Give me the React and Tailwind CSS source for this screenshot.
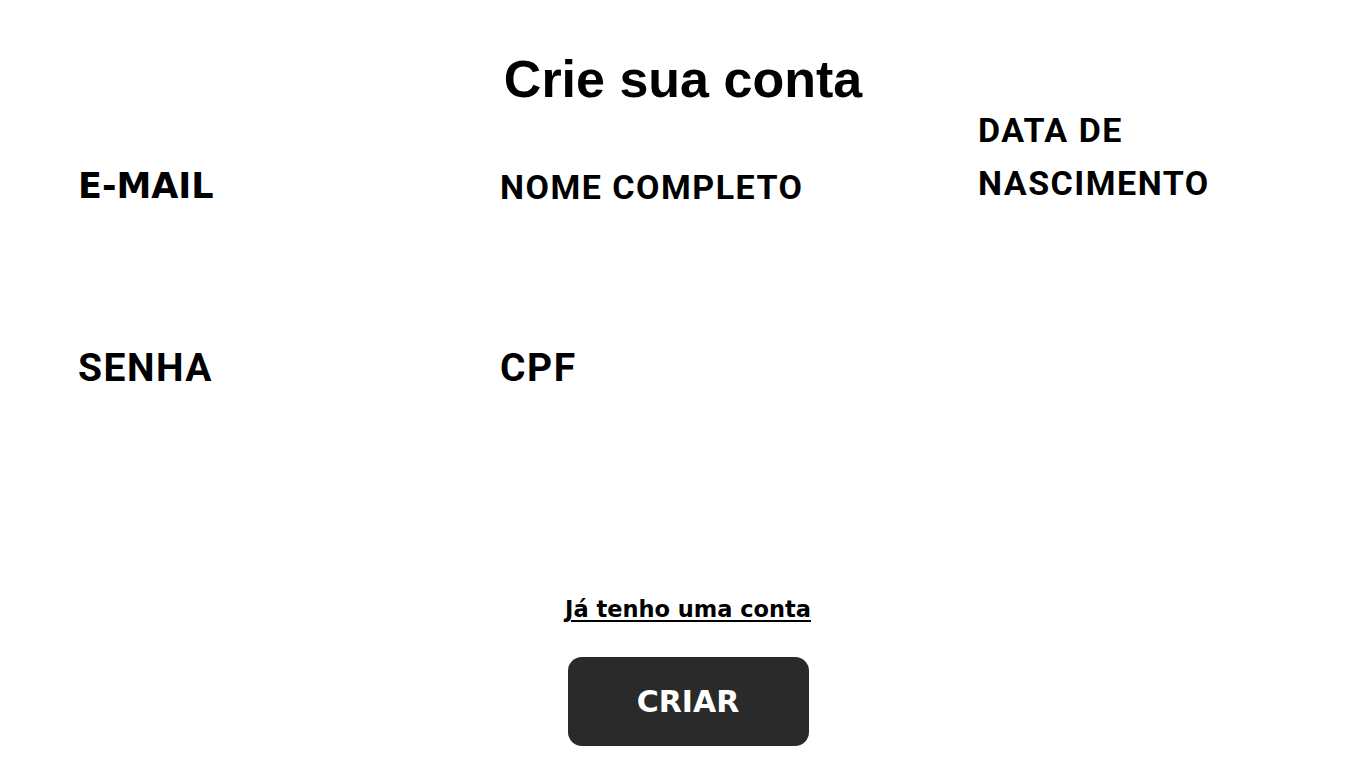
import React from "react";

const labelBase = "block font-bold uppercase text-black";

export default function App() {
  return (
    <div className="min-h-screen bg-white font-['Liberation_Sans',Arial,sans-serif] text-black">
      <h1 className="pt-[53px] text-center text-[52px] font-bold leading-none">
        Crie sua conta
      </h1>

      <form className="mt-[7px]">
        <div className="grid grid-cols-[422px_478px_300px] pl-[78px]">
          <div className="flex h-[92px] items-end">
            <span className={`${labelBase} font-['DejaVu_Sans',sans-serif] text-[35px] leading-none`}>
              E-mail
            </span>
          </div>
          <div className="flex h-[92px] items-end">
            <span className={`${labelBase} font-['Roboto',sans-serif] text-[34px] tracking-[1.5px] leading-none`}>
              Nome completo
            </span>
          </div>
          <div className="flex h-[92px] items-end">
            <span className={`${labelBase} -mb-[6px] font-['Roboto',sans-serif] text-[34px] tracking-[1.5px] leading-[53px]`}>
              Data de
              <br />
              nascimento
            </span>
          </div>

          <div className="h-[90px]"></div>
          <div className="h-[90px]"></div>
          <div className="h-[90px]"></div>

          <div className="flex h-[94px] items-end">
            <span className={`${labelBase} font-['Roboto',sans-serif] text-[39px] tracking-[1.5px] leading-none`}>
              Senha
            </span>
          </div>
          <div className="flex h-[94px] items-end">
            <span className={`${labelBase} font-['Roboto',sans-serif] text-[39px] tracking-[1.5px] leading-none`}>
              CPF
            </span>
          </div>
          <div></div>
        </div>

        <div className="mt-[210px] flex flex-col items-center pl-[10px]">
          <a
            href="#"
            className="font-['DejaVu_Sans',sans-serif] text-[22.5px] font-bold leading-none underline underline-offset-[3px]"
          >
            Já tenho uma conta
          </a>
          <button
            type="submit"
            className="mt-[36px] h-[89px] w-[241px] rounded-[14px] bg-[#2a2a2a] font-['DejaVu_Sans',sans-serif] text-[30px] font-bold uppercase text-white"
          >
            Criar
          </button>
        </div>
      </form>
    </div>
  );
}
